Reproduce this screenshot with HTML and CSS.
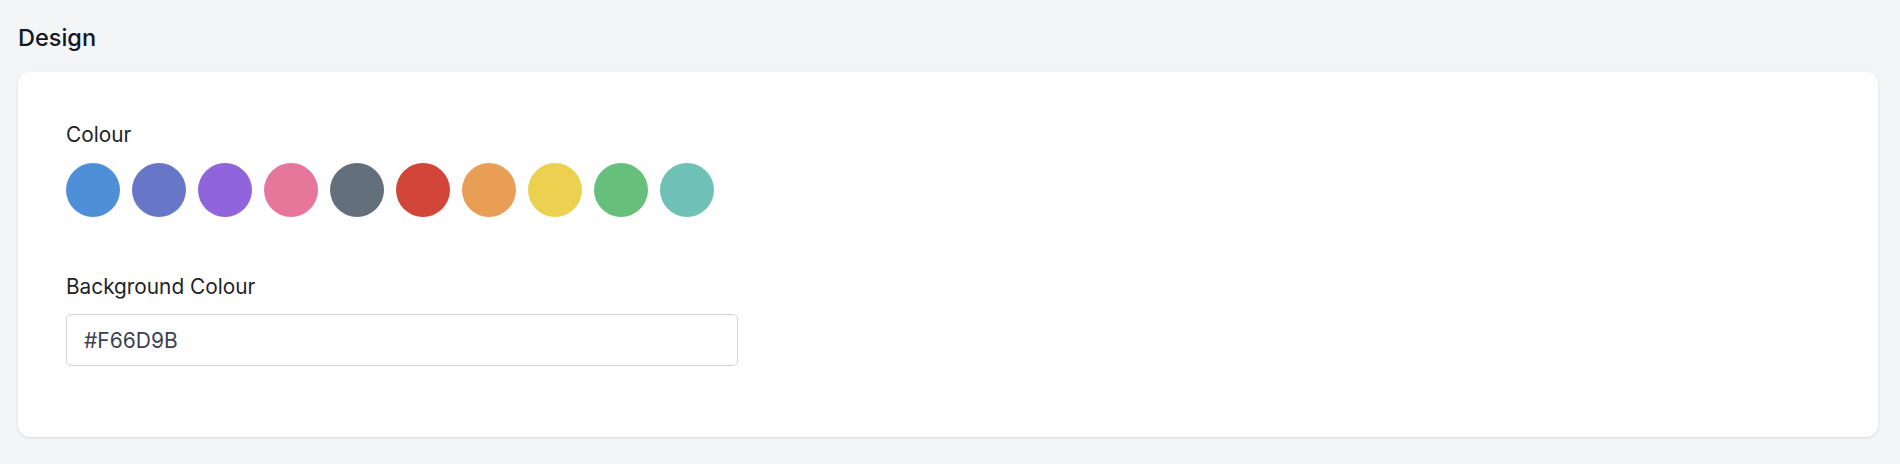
FILE: index.html
```html
<!DOCTYPE html>
<html lang="en">
<head>
<meta charset="utf-8">
<title>Design</title>
<link rel="stylesheet" href="styles.css">
</head>
<body>
<main class="page">
  <h2 class="section-title">Design</h2>
  <section class="card">
    <div class="field">
      <label class="field-label">Colour</label>
      <div class="swatches">
        <span class="swatch sw-blue"></span>
        <span class="swatch sw-indigo"></span>
        <span class="swatch sw-purple"></span>
        <span class="swatch sw-pink"></span>
        <span class="swatch sw-grey"></span>
        <span class="swatch sw-red"></span>
        <span class="swatch sw-orange"></span>
        <span class="swatch sw-yellow"></span>
        <span class="swatch sw-green"></span>
        <span class="swatch sw-teal"></span>
      </div>
    </div>
    <div class="field field-bg">
      <label class="field-label" for="bg">Background Colour</label>
      <input class="text-input" id="bg" type="text" value="#F66D9B">
    </div>
  </section>
</main>
</body>
</html>
```
FILE: styles.css
```css
* { box-sizing: border-box; }
html, body { margin: 0; padding: 0; }
body {
  background: #f4f5f7;
  font-family: Inter, "Noto Sans", sans-serif;
  color: #1f2328;
}
.page {
  padding: 18px 22px 26px 18px;
}
.section-title {
  margin: 0 0 14px 0;
  font-size: 23.5px;
  font-weight: 500;
  line-height: 40px;
  color: #111827;
}
.card {
  background: #ffffff;
  border-radius: 12px;
  box-shadow: 0 1px 3px rgba(0, 0, 0, 0.10), 0 1px 2px rgba(0, 0, 0, 0.04);
  padding: 48px 48px 71px 48px;
}
.field {
  display: flex;
  flex-direction: column;
  align-items: flex-start;
}
.field-bg {
  margin-top: 55px;
}
.field-label {
  font-size: 20.8px;
  line-height: 30px;
  color: #1f2328;
}
.swatches {
  display: flex;
  gap: 12px;
  margin-top: 13px;
}
.swatch {
  width: 54px;
  height: 54px;
  border-radius: 50%;
  display: block;
}
.sw-blue { background: #4f8fd8; }
.sw-indigo { background: #6876c7; }
.sw-purple { background: #9065dc; }
.sw-pink { background: #e6779b; }
.sw-grey { background: #636f7a; }
.sw-red { background: #d14638; }
.sw-orange { background: #e99e56; }
.sw-yellow { background: #ecd151; }
.sw-green { background: #66bf7a; }
.sw-teal { background: #6fc0b6; }
.text-input {
  margin-top: 12px;
  width: 672px;
  height: 52px;
  border: 1px solid #d1d5db;
  border-radius: 5px;
  padding: 0 17px;
  font-family: Inter, "Noto Sans", sans-serif;
  font-size: 21px;
  color: #3b4150;
  background: #ffffff;
  outline: none;
}
```
